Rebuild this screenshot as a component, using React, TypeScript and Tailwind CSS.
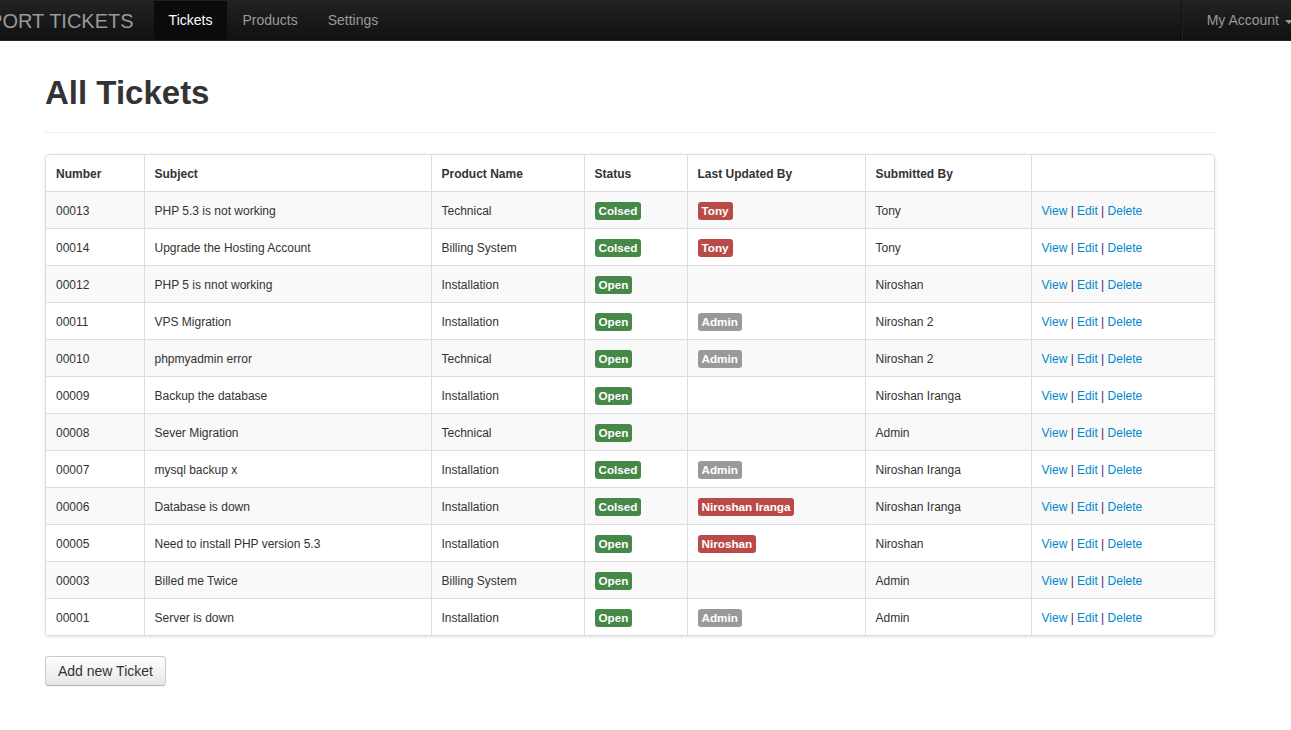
import React from 'react'

type Tag = { text: string; color: 'green' | 'red' | 'gray' }

type Ticket = {
  number: string
  subject: string
  product: string
  status: 'Open' | 'Colsed'
  updatedBy?: Tag
  submittedBy: string
}

const tickets: Ticket[] = [
  { number: '00013', subject: 'PHP 5.3 is not working', product: 'Technical', status: 'Colsed', updatedBy: { text: 'Tony', color: 'red' }, submittedBy: 'Tony' },
  { number: '00014', subject: 'Upgrade the Hosting Account', product: 'Billing System', status: 'Colsed', updatedBy: { text: 'Tony', color: 'red' }, submittedBy: 'Tony' },
  { number: '00012', subject: 'PHP 5 is nnot working', product: 'Installation', status: 'Open', submittedBy: 'Niroshan' },
  { number: '00011', subject: 'VPS Migration', product: 'Installation', status: 'Open', updatedBy: { text: 'Admin', color: 'gray' }, submittedBy: 'Niroshan 2' },
  { number: '00010', subject: 'phpmyadmin error', product: 'Technical', status: 'Open', updatedBy: { text: 'Admin', color: 'gray' }, submittedBy: 'Niroshan 2' },
  { number: '00009', subject: 'Backup the database', product: 'Installation', status: 'Open', submittedBy: 'Niroshan Iranga' },
  { number: '00008', subject: 'Sever Migration', product: 'Technical', status: 'Open', submittedBy: 'Admin' },
  { number: '00007', subject: 'mysql backup x', product: 'Installation', status: 'Colsed', updatedBy: { text: 'Admin', color: 'gray' }, submittedBy: 'Niroshan Iranga' },
  { number: '00006', subject: 'Database is down', product: 'Installation', status: 'Colsed', updatedBy: { text: 'Niroshan Iranga', color: 'red' }, submittedBy: 'Niroshan Iranga' },
  { number: '00005', subject: 'Need to install PHP version 5.3', product: 'Installation', status: 'Open', updatedBy: { text: 'Niroshan', color: 'red' }, submittedBy: 'Niroshan' },
  { number: '00003', subject: 'Billed me Twice', product: 'Billing System', status: 'Open', submittedBy: 'Admin' },
  { number: '00001', subject: 'Server is down', product: 'Installation', status: 'Open', updatedBy: { text: 'Admin', color: 'gray' }, submittedBy: 'Admin' },
]

const labelColors = {
  green: 'bg-[#468847]',
  red: 'bg-[#b94a48]',
  gray: 'bg-[#999999]',
}

function Label({ tag }: { tag: Tag }) {
  return (
    <span
      className={`inline-block align-middle rounded-[3px] px-1 py-[2px] text-[11.7px] font-bold leading-[14px] text-white ${labelColors[tag.color]}`}
    >
      {tag.text}
    </span>
  )
}

function Navbar() {
  return (
    <div className="h-[41px] overflow-hidden border-b border-[#252525] bg-gradient-to-b from-[#222222] to-[#111111]">
      <div className="flex h-10 items-stretch pt-px">
        {/* brand (partly off screen) */}
        <a className="flex items-center whitespace-nowrap pr-5 text-[20px] leading-5 text-[#999999]">
          <span className="ml-[-52px]">SUPPORT TICKETS</span>
        </a>
        <nav className="flex items-stretch text-[14px]">
          <a className="flex items-center bg-[#0b0b0b] px-[15px] text-white">Tickets</a>
          <a className="flex items-center px-[15px] text-[#999999]">Products</a>
          <a className="flex items-center px-[15px] text-[#999999]">Settings</a>
        </nav>
        <div className="ml-auto mr-[-17px] flex items-stretch">
          <div className="mx-[9px] flex">
            <div className="w-px bg-[#111111]" />
            <div className="w-px bg-[#222222]" />
          </div>
          <a className="flex items-center px-[15px] text-[14px] text-[#999999]">
            My Account
            <span className="ml-[6px] mt-[2px] inline-block h-0 w-0 border-x-4 border-t-4 border-x-transparent border-t-[#999999]" />
          </a>
        </div>
      </div>
    </div>
  )
}

const cell = 'border-l border-t border-[#dddddd] px-[10px] pt-[9px] pb-[7px]'
const labelCell = 'border-l border-t border-[#dddddd] px-[10px] py-2'

export default function App() {
  const headers = ['Number', 'Subject', 'Product Name', 'Status', 'Last Updated By', 'Submitted By', '']
  const widths = ['w-[98px]', 'w-[287px]', 'w-[153px]', 'w-[103px]', 'w-[178px]', 'w-[166px]', '']

  return (
    <div className="min-h-screen overflow-x-hidden bg-white font-['Liberation_Sans',Arial,sans-serif] text-[#333333]">
      <Navbar />

      <div className="ml-[45px] w-[1170px]">
        <div className="mb-[21px] mt-[32px] border-b border-[#eeeeee] pb-[9px]">
          <h1 className="my-[10px] text-[33px] font-bold leading-[40px] text-[#333333]">All Tickets</h1>
        </div>

        <div className="overflow-hidden rounded-[4px] border border-[#dddddd] shadow-[0_1px_3px_rgba(0,0,0,0.12)]">
          <table className="w-full table-fixed border-collapse text-[12px] leading-5">
            <thead>
              <tr>
                {headers.map((h, i) => (
                  <th
                    key={i}
                    className={`${widths[i]} px-[10px] pt-[9px] pb-[7px] text-left font-bold ${i > 0 ? 'border-l border-[#dddddd]' : ''}`}
                  >
                    {h}
                  </th>
                ))}
              </tr>
            </thead>
            <tbody>
              {tickets.map((t, r) => (
                <tr key={t.number} className={r % 2 === 0 ? 'bg-[#f9f9f9]' : 'bg-white'}>
                  <td className="border-t border-[#dddddd] px-[10px] pt-[9px] pb-[7px]">{t.number}</td>
                  <td className={cell}>{t.subject}</td>
                  <td className={cell}>{t.product}</td>
                  <td className={labelCell}>
                    <Label tag={{ text: t.status, color: 'green' }} />
                  </td>
                  <td className={labelCell}>{t.updatedBy && <Label tag={t.updatedBy} />}</td>
                  <td className={cell}>{t.submittedBy}</td>
                  <td className={cell}>
                    <a className="text-[#0088cc]">View</a>
                    <span className="text-[#5b2160]"> | </span>
                    <a className="text-[#0088cc]">Edit</a>
                    <span className="text-[#5b2160]"> | </span>
                    <a className="text-[#0088cc]">Delete</a>
                  </td>
                </tr>
              ))}
            </tbody>
          </table>
        </div>

        <button className="mt-[20px] rounded-[4px] border border-[#cccccc] border-b-[#b3b3b3] bg-gradient-to-b from-white to-[#e6e6e6] px-3 py-1 text-[14px] leading-5 text-[#333333] shadow-[inset_0_1px_0_rgba(255,255,255,0.2),0_1px_2px_rgba(0,0,0,0.05)]">
          Add new Ticket
        </button>
      </div>
    </div>
  )
}
